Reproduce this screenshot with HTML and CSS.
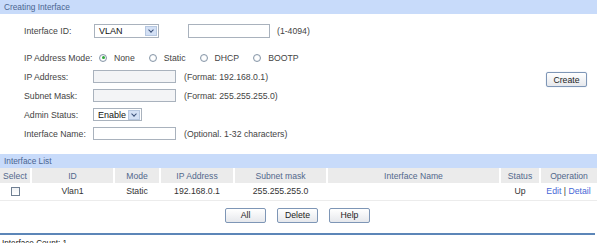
FILE: index.html
```html
<!DOCTYPE html>
<html lang="en">
<head>
  <meta charset="UTF-8">
  <title>Creating Interface</title>
  <link rel="stylesheet" href="styles.css">
</head>
<body>
  <div class="panel">
    <div class="bar">Creating Interface</div>
    <div class="form">
      <div class="row row-id">
        <span class="label">Interface ID:</span>
        <span class="select select-vlan"><span class="value">VLAN</span><i class="arrow"></i></span>
        <span class="text text-id"></span>
        <span class="hint hint-id">(1-4094)</span>
      </div>
      <div class="row row-mode">
        <span class="label">IP Address Mode:</span>
        <span class="radio on"></span><span class="opt">None</span>
        <span class="radio"></span><span class="opt">Static</span>
        <span class="radio"></span><span class="opt">DHCP</span>
        <span class="radio"></span><span class="opt">BOOTP</span>
      </div>
      <div class="row">
        <span class="label">IP Address:</span>
        <span class="text off"></span>
        <span class="hint">(Format: 192.168.0.1)</span>
        <button class="btn create">Create</button>
      </div>
      <div class="row">
        <span class="label">Subnet Mask:</span>
        <span class="text off"></span>
        <span class="hint">(Format: 255.255.255.0)</span>
      </div>
      <div class="row">
        <span class="label">Admin Status:</span>
        <span class="select select-status"><span class="value">Enable</span><i class="arrow"></i></span>
      </div>
      <div class="row">
        <span class="label">Interface Name:</span>
        <span class="text"></span>
        <span class="hint">(Optional. 1-32 characters)</span>
      </div>
    </div>

    <div class="bar">Interface List</div>
    <table class="list">
      <colgroup>
        <col style="width: 31px">
        <col style="width: 83px">
        <col style="width: 46px">
        <col style="width: 74px">
        <col style="width: 93px">
        <col style="width: 173px">
        <col style="width: 40px">
        <col style="width: 57px">
      </colgroup>
      <thead>
        <tr>
          <th>Select</th>
          <th>ID</th>
          <th>Mode</th>
          <th>IP Address</th>
          <th>Subnet mask</th>
          <th>Interface Name</th>
          <th>Status</th>
          <th>Operation</th>
        </tr>
      </thead>
      <tbody>
        <tr>
          <td><span class="check"></span></td>
          <td>Vlan1</td>
          <td>Static</td>
          <td>192.168.0.1</td>
          <td>255.255.255.0</td>
          <td></td>
          <td>Up</td>
          <td><a href="#">Edit</a> | <a href="#">Detail</a></td>
        </tr>
      </tbody>
    </table>

    <div class="actions">
      <button class="btn">All</button>
      <button class="btn">Delete</button>
      <button class="btn">Help</button>
    </div>
    <div class="footer">Interface Count: 1</div>
  </div>
</body>
</html>
```

FILE: styles.css
```css
* {
  margin: 0;
  padding: 0;
  box-sizing: border-box;
}

body {
  font-family: "Liberation Sans", Arial, sans-serif;
  font-size: 8.7px;
  color: #444;
  background: #fff;
  overflow: hidden;
}

.panel {
  width: 597px;
}

.bar {
  height: 14px;
  line-height: 14px;
  padding-left: 4px;
  background: #c8dbfa;
  color: #4a6590;
  font-size: 8.3px;
}

/* form */
.form {
  padding: 7px 10px 11px 24px;
}

.row {
  display: flex;
  align-items: center;
  height: 19px;
}

.row-id {
  margin-bottom: 8px;
}

.label {
  width: 69px;
  flex: none;
}

.text {
  width: 83px;
  height: 13px;
  border: 1px solid #a9b2bd;
  background: #fff;
}

.text.off {
  background: #f3f4f6;
}

.text-id {
  width: 82px;
  height: 14px;
  margin-left: 29px;
}

.hint {
  margin-left: 8px;
}

.hint-id {
  margin-left: 7px;
}

.select {
  display: flex;
  align-items: center;
  height: 14px;
  border: 1px solid #a9b2bd;
  background: #fff;
  color: #111;
}

.select .value {
  flex: 1;
  padding-left: 4px;
  font-size: 9px;
}

.select-vlan {
  width: 65px;
  margin-left: 1px;
}

.select-status {
  width: 49px;
  height: 13px;
}

.arrow {
  width: 12px;
  height: 10px;
  margin-right: 1px;
  background: #d3e0f5;
  border: 1px solid #b6c7e0;
  position: relative;
}

.arrow::after {
  content: "";
  position: absolute;
  left: 3px;
  top: 1px;
  width: 3px;
  height: 3px;
  border-right: 1.5px solid #3a4f78;
  border-bottom: 1.5px solid #3a4f78;
  transform: rotate(45deg);
}

.radio {
  width: 8px;
  height: 8px;
  border: 1px solid #8897a8;
  border-radius: 50%;
  background: radial-gradient(circle, #fff 40%, #dde3ea);
  margin-left: 14px;
  position: relative;
}

.row-mode .label + .radio {
  margin-left: 6px;
}

.radio.on::after {
  content: "";
  position: absolute;
  left: 1.5px;
  top: 1.5px;
  width: 3px;
  height: 3px;
  border-radius: 50%;
  background: #2fa83a;
}

.opt {
  margin-left: 7px;
}

.btn {
  width: 41px;
  height: 15px;
  border: 1px solid #7e96b6;
  border-radius: 2px;
  background: linear-gradient(#ffffff, #e6e8ec);
  font-family: "Liberation Sans", Arial, sans-serif;
  font-size: 8.7px;
  color: #222;
}

.create {
  margin-left: auto;
  margin-top: 6px;
  box-shadow: 0 0 1px #9fb6d6;
}

/* table */
.list {
  width: 597px;
  table-layout: fixed;
  border-collapse: collapse;
}

.list th {
  height: 15px;
  background: #ebebeb;
  color: #52688c;
  font-weight: normal;
  font-size: 8.6px;
  border-left: 2px solid #fff;
}

.list th:first-child {
  border-left: none;
}

.list td {
  height: 17px;
  text-align: center;
  color: #333;
  border-bottom: 1px solid #ececec;
}

.list a {
  color: #4767d6;
  text-decoration: none;
}

.check {
  display: inline-block;
  width: 9px;
  height: 9px;
  border: 1px solid #6f7f92;
  background: linear-gradient(#f0f2f4, #fff);
  vertical-align: middle;
}

.actions {
  display: flex;
  justify-content: center;
  gap: 11px;
  height: 34px;
  padding: 7px 0 0 0;
  border-bottom: 2px solid #5c86b8;
  width: 595px;
}

.footer {
  padding: 4px 0 0 2px;
  color: #222;
  font-size: 8.2px;
}
```
